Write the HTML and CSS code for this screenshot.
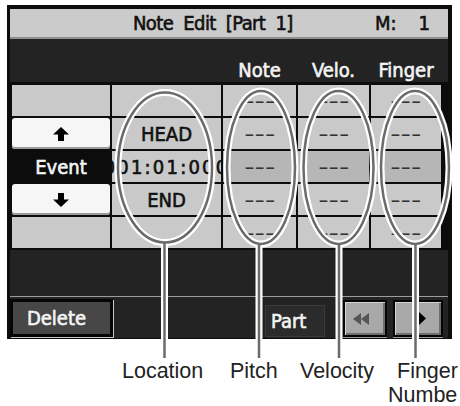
FILE: index.html
```html
<!DOCTYPE html>
<html>
<head>
<meta charset="utf-8">
<link rel="stylesheet" href="styles.css">
</head>
<body>
<div class="page">
  <div class="screen lcd">
    <div class="titlebar">
      <span class="title">Note Edit [Part 1]</span>
      <span class="meas">M:</span>
      <span class="measnum">1</span>
    </div>
    <div class="headband">
      <div class="cols">
        <span></span><span></span><span class="head">Note</span><span class="head">Velo.</span><span class="head">Finger</span>
      </div>
    </div>
    <div class="grid">
      <div class="cell"></div>
      <div class="cell"></div>
      <div class="cell"><span class="dash">---</span></div>
      <div class="cell"><span class="dash">---</span></div>
      <div class="cell"><span class="dash">---</span></div>

      <div class="cell btn"><svg width="16" height="14" viewBox="0 0 16 14"><path d="M8 0 L16 7.5 L11 7.5 L11 14 L5 14 L5 7.5 L0 7.5 Z" fill="#000"/></svg></div>
      <div class="cell">HEAD</div>
      <div class="cell"><span class="dash">---</span></div>
      <div class="cell"><span class="dash">---</span></div>
      <div class="cell"><span class="dash">---</span></div>

      <div class="cell event">Event</div>
      <div class="cell clip"><span class="loc">001:01:000</span></div>
      <div class="cell sel"><span class="dash">---</span></div>
      <div class="cell sel"><span class="dash">---</span></div>
      <div class="cell sel"><span class="dash">---</span></div>

      <div class="cell btn"><svg width="16" height="14" viewBox="0 0 16 14"><path d="M8 14 L16 6.5 L11 6.5 L11 0 L5 0 L5 6.5 L0 6.5 Z" fill="#000"/></svg></div>
      <div class="cell">END</div>
      <div class="cell"><span class="dash">---</span></div>
      <div class="cell"><span class="dash">---</span></div>
      <div class="cell"><span class="dash">---</span></div>

      <div class="cell"></div>
      <div class="cell"></div>
      <div class="cell"><span class="dash">---</span></div>
      <div class="cell"><span class="dash">---</span></div>
      <div class="cell"><span class="dash">---</span></div>
    </div>
    <div class="blank"></div>
    <div class="bottombar">
      <div class="delete">Delete</div>
      <div class="part">Part</div>
      <div class="navbtn rew"><svg width="16" height="12" viewBox="0 0 16 12"><path d="M0 6 L8 0 L8 12 Z M8 6 L16 0 L16 12 Z" fill="#555"/></svg></div>
      <div class="navbtn fwd"><svg width="7" height="13" viewBox="0 0 7 13"><path d="M0 0 L7 6.5 L0 13 Z" fill="#000"/></svg></div>
    </div>
  </div>
  <div class="labels">
    <span class="lbl l-loc">Location</span>
    <span class="lbl l-pitch">Pitch</span>
    <span class="lbl l-velo">Velocity</span>
    <span class="lbl l-fing"><span class="fing1">Finger</span><span class="fing2">Numbe</span></span>
  </div>
  <svg class="callouts" width="460" height="406" viewBox="0 0 460 406">
    <g fill="none" stroke="#fff" stroke-width="7">
      <ellipse cx="165" cy="162.5" rx="47" ry="75"/>
      <ellipse cx="261" cy="162.5" rx="34" ry="76.5"/>
      <ellipse cx="338.5" cy="162.5" rx="35" ry="76.5"/>
      <ellipse cx="415" cy="162.5" rx="34" ry="76.5"/>
      <line x1="164.5" y1="238" x2="164.5" y2="340"/>
      <line x1="259" y1="239" x2="259" y2="340"/>
      <line x1="339" y1="239" x2="339" y2="340"/>
      <line x1="415.5" y1="239" x2="415.5" y2="340"/>
    </g>
    <g fill="none" stroke="#6b6b6b" stroke-width="2.5">
      <ellipse cx="165" cy="162.5" rx="47" ry="75"/>
      <ellipse cx="261" cy="162.5" rx="34" ry="76.5"/>
      <ellipse cx="338.5" cy="162.5" rx="35" ry="76.5"/>
      <ellipse cx="415" cy="162.5" rx="34" ry="76.5"/>
      <line x1="164.5" y1="237.5" x2="164.5" y2="353"/>
      <line x1="259" y1="239" x2="259" y2="353"/>
      <line x1="339" y1="239" x2="339" y2="353"/>
      <line x1="415.5" y1="239" x2="415.5" y2="353"/>
    </g>
  </svg>
</div>
</body>
</html>
```

FILE: styles.css
```css
html, body {
  margin: 0;
  padding: 0;
}
body {
  width: 460px;
  height: 406px;
  overflow: hidden;
  background: #fff;
  font-family: "Liberation Sans", Arial, sans-serif;
}
.page {
  position: relative;
  width: 460px;
  height: 406px;
}
.screen {
  margin: 5px 0 0 7px;
  width: 445px;
  box-sizing: border-box;
  background: #0c0c0c;
  padding: 4px 4px 1px 3px;
}
.lcd {
  font-family: "DejaVu Sans Condensed", "DejaVu Sans", sans-serif;
  -webkit-text-stroke: 0.6px currentColor;
}
.titlebar {
  height: 28px;
  background: #cbcbcb;
  border-bottom: 2px solid #8e8e8e;
  display: flex;
  align-items: center;
  color: #111;
  font-size: 20px;
  line-height: 20px;
}
.title {
  margin-left: 123px;
  letter-spacing: -0.6px;
  word-spacing: 5px;
}
.meas {
  margin-left: auto;
}
.measnum {
  margin-left: 22px;
  margin-right: 18px;
}
.headband {
  height: 43px;
  background: #232323;
  display: flex;
  align-items: flex-end;
}
.cols {
  display: grid;
  grid-template-columns: 98px 109px 73px 71px 70px;
  column-gap: 2px;
  padding: 0 0 1px 2px;
  color: #f4f4f4;
  font-size: 20px;
  line-height: 22px;
}
.head {
  text-align: center;
}
.grid {
  display: grid;
  grid-template-columns: 98px 109px 73px 71px 70px;
  grid-auto-rows: 31px;
  gap: 2px;
  padding: 3px 7px 2px 2px;
  background: #0c0c0c;
}
.cell {
  background: #c9c9c9;
  display: flex;
  align-items: center;
  justify-content: center;
  color: #111;
  font-size: 20px;
  overflow: hidden;
}
.cell.sel {
  background: #b6b6b6;
}
.cell.btn {
  background: #f6f6f6;
  border-radius: 3px;
  box-shadow: inset 0 -2px 0 #9a9a9a;
}
.cell.event {
  background: #0c0c0c;
  color: #f4f4f4;
}
.cell.clip {
  justify-content: center;
}
.loc {
  letter-spacing: 2.2px;
  white-space: nowrap;
  flex: none;
}
.dash {
  display: inline-block;
  color: #333;
  transform: scaleX(1.6);
  -webkit-text-stroke: 0;
}
.blank {
  height: 46px;
  background: #232323;
}
.bottombar {
  height: 41px;
  border-top: 1px solid #9c9c9c;
  background: #232323;
  display: flex;
  align-items: flex-start;
  color: #f4f4f4;
  font-size: 20px;
}
.delete {
  margin-top: 2px;
  width: 103px;
  height: 38px;
  box-sizing: border-box;
  background: #474747;
  border: 3px solid #050505;
  box-shadow: 1px 1px 0 #c8c8c8;
  display: flex;
  align-items: center;
  justify-content: center;
  padding-right: 10px;
}
.part {
  margin-top: 8px;
  margin-left: 152px;
  width: 60px;
  height: 32px;
  box-sizing: border-box;
  background: #2b2b2b;
  border: 1px solid #3a3a3a;
  display: flex;
  align-items: center;
  padding-left: 5px;
}
.navbtn {
  margin-top: 3px;
  height: 37px;
  box-sizing: border-box;
  background: #a8a8a8;
  border: 2px solid #050505;
  box-shadow: inset 1px 1px 0 #d4d4d4, inset -2px -2px 0 #6e6e6e, 0 1px 0 #9a9a9a;
  display: flex;
  align-items: center;
  justify-content: center;
}
.rew {
  margin-left: 18px;
  width: 44px;
  padding-right: 8px;
}
.fwd {
  margin-left: 6px;
  width: 50px;
  padding-left: 8px;
}
.labels {
  display: flex;
  margin-top: 20px;
  padding-left: 122px;
  font-size: 21.5px;
  line-height: 24px;
  color: #222;
}
.lbl {
  flex: none;
  white-space: nowrap;
}
.l-loc { width: 108px; }
.l-pitch { width: 70px; }
.l-velo { width: 88px; }
.l-fing {
  display: flex;
  flex-direction: column;
}
.fing1 {
  padding-left: 9px;
}
.callouts {
  position: absolute;
  left: 0;
  top: 0;
  pointer-events: none;
}
```
